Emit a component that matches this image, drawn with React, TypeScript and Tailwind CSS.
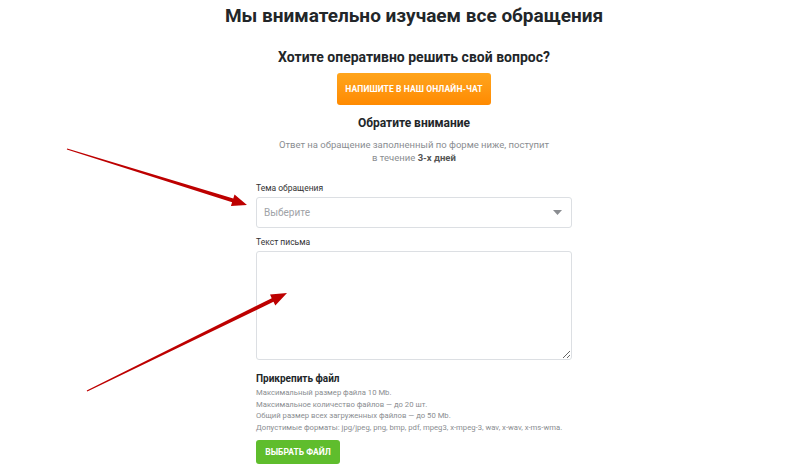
import React from "react";

export default function App() {
  const font = { fontFamily: "Roboto, 'Noto Sans', sans-serif" };
  return (
    <div className="relative w-[800px] h-[472px] overflow-hidden bg-white" style={font}>
      <div className="flex justify-center pl-[28px]">
        <div className="flex flex-col items-center w-[316px]">
          <h1 className="mt-[4px] text-[19px] leading-[24px] font-bold text-[#222629] whitespace-nowrap">
            Мы внимательно изучаем все обращения
          </h1>
          <h2 className="mt-[20px] text-[14px] leading-[18px] font-bold text-[#222629] whitespace-nowrap">
            Хотите оперативно решить свой вопрос?
          </h2>
          <button className="mt-[7px] w-[154px] h-[32px] rounded-[3px] bg-gradient-to-b from-[#ffa51c] to-[#ff8a00] text-white text-[8.5px] font-bold uppercase tracking-[0.1px]">
            Напишите в наш онлайн-чат
          </button>
          <h3 className="mt-[10px] text-[12px] leading-[16px] font-bold text-[#222629]">Обратите внимание</h3>
          <p className="mt-[7px] text-[9.5px] leading-[13px] text-[#8a8d91] text-center">
            Ответ на обращение заполненный по форме ниже, поступит
            <br />в течение <span className="font-bold text-[#555]">3-х дней</span>
          </p>
          <div className="w-full mt-[19px]">
            <label className="block text-[8.5px] leading-[11px] text-[#333]">Тема обращения</label>
            <div className="mt-[3px] h-[31px] w-full border border-[#dcdfe3] rounded-[3px] flex items-center justify-between px-[7px]">
              <span className="text-[10px] text-[#a0a3a7]">Выберите</span>
              <svg width="9" height="6" viewBox="0 0 9 6" className="mr-[2px]">
                <path d="M0 0 L9 0 L4.5 5 Z" fill="#8a8d91" />
              </svg>
            </div>
            <label className="block mt-[9px] text-[8.5px] leading-[11px] text-[#333]">Текст письма</label>
            <textarea className="mt-[3px] block w-full h-[109px] border border-[#dcdfe3] rounded-[3px] outline-none" />
            <div className="mt-[12px] text-[10px] leading-[13px] font-bold text-[#222629]">Прикрепить файл</div>
            <div className="mt-[2px] text-[7.7px] leading-[11.5px] text-[#8a8d91] whitespace-nowrap">
              <div>Максимальный размер файла 10 Mb.</div>
              <div>Максимальное количество файлов — до 20 шт.</div>
              <div>Общий размер всех загруженных файлов — до 50 Mb.</div>
              <div>Допустимые форматы: jpg/jpeg, png, bmp, pdf, mpeg3, x-mpeg-3, wav, x-wav, x-ms-wma.</div>
            </div>
            <button className="mt-[7px] w-[84px] h-[24px] rounded-[3px] bg-[#5fbd2d] text-white text-[8.5px] font-bold uppercase">
              Выбрать файл
            </button>
          </div>
        </div>
      </div>
      <svg className="absolute inset-0 pointer-events-none" width="800" height="472" viewBox="0 0 800 472">
        <polygon
          points="67.15,148.4 233.3,198.4 234.5,194.6 247,205 230.9,206.0 232.1,202.2 66.85,149.6"
          fill="#bd0000"
        />
        <polygon
          points="86.7,390.4 271.7,298.2 270.0,294.6 287,293 275.3,305.4 273.5,301.8 87.3,391.6"
          fill="#bd0000"
        />
      </svg>
    </div>
  );
}
